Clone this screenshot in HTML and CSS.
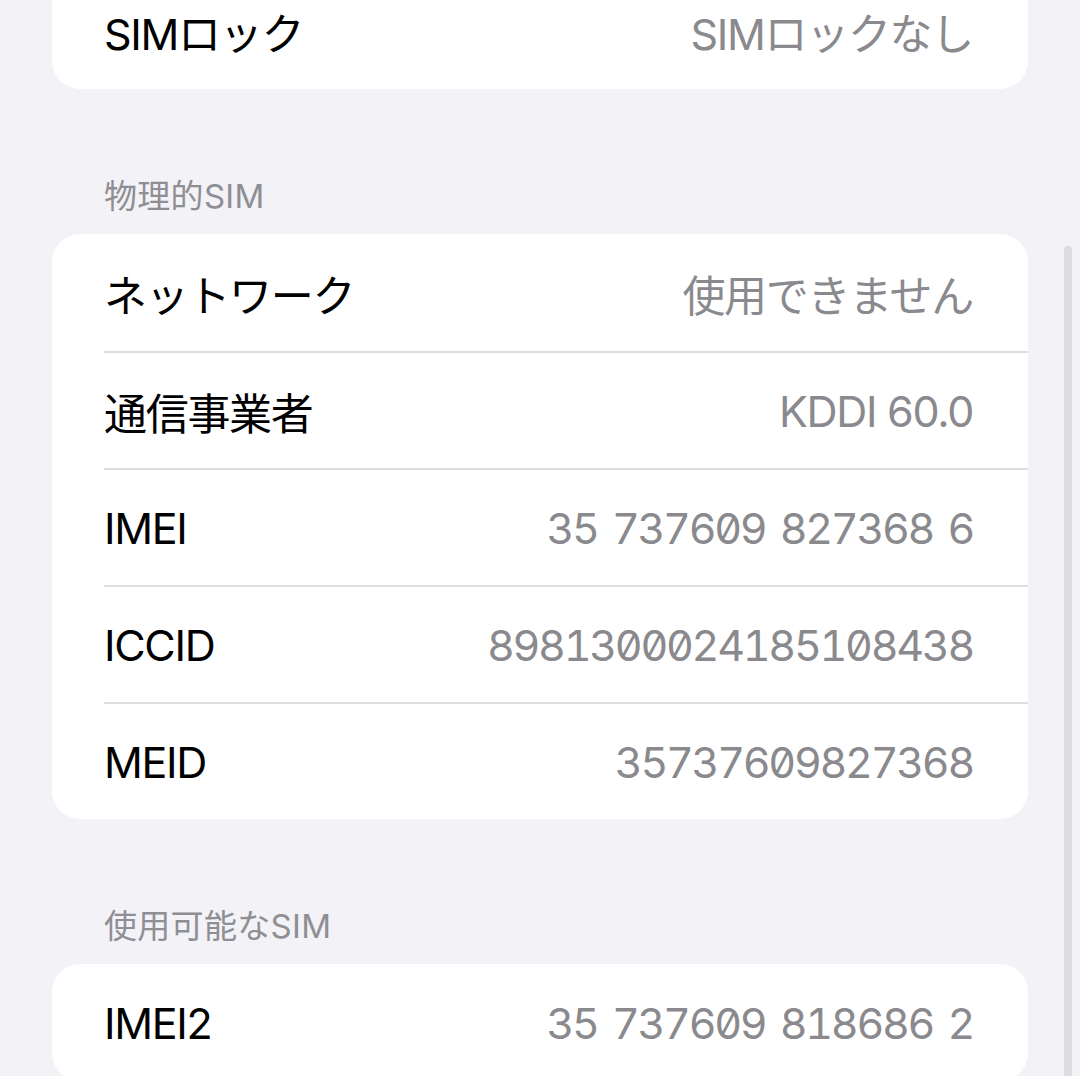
FILE: index.html
```html
<!DOCTYPE html>
<html lang="ja">
<head>
    <meta charset="UTF-8">
    <meta name="viewport" content="width=device-width, initial-scale=1.0">
    <title>SIM情報</title>
    <link rel="stylesheet" href="styles.css">
</head>
<body>
    <div class="page">
        <div class="card">
            <div class="row">
                <span class="label">SIMロック</span>
                <span class="value">SIMロックなし</span>
            </div>
        </div>

        <div class="section">物理的SIM</div>
        <div class="card">
            <div class="row">
                <span class="label">ネットワーク</span>
                <span class="value">使用できません</span>
            </div>
            <div class="row">
                <span class="label">通信事業者</span>
                <span class="value">KDDI 60.0</span>
            </div>
            <div class="row">
                <span class="label">IMEI</span>
                <span class="value num">35 737609 827368 6</span>
            </div>
            <div class="row">
                <span class="label">ICCID</span>
                <span class="value num">8981300024185108438</span>
            </div>
            <div class="row">
                <span class="label">MEID</span>
                <span class="value num">35737609827368</span>
            </div>
        </div>

        <div class="section">使用可能なSIM</div>
        <div class="card">
            <div class="row">
                <span class="label">IMEI2</span>
                <span class="value num">35 737609 818686 2</span>
            </div>
        </div>
    </div>
    <div class="scrollbar"></div>
</body>
</html>
```

FILE: styles.css
```css
*{
    margin:0;
    padding:0;
    box-sizing:border-box;
}

body{
    background:#f2f2f7;
    font-family:Inter, "Noto Sans CJK JP", sans-serif;
    height:1076px;
    overflow:hidden;
}

.page{
    margin-top:-28px;
    padding:0 52px;
}

.card{
    background:#fff;
    border-radius:28px;
    overflow:hidden;
}

.row{
    height:117px;
    margin-left:52px;
    padding-right:55px;
    display:flex;
    align-items:center;
    justify-content:space-between;
    font-size:43px;
    letter-spacing:-1.3px;
}
.row + .row{
    border-top:2px solid #dedee2;
}

.label{
    color:#000;
}
.value{
    color:#8a8a8e;
}
.num{
    font-feature-settings:"tnum", "zero";
    letter-spacing:-2.3px;
    word-spacing:5px;
}

.section{
    height:145px;
    padding:0 0 22px 52px;
    display:flex;
    align-items:flex-end;
    font-size:33px;
    line-height:32px;
    letter-spacing:0.3px;
    color:#8e8e93;
}

.scrollbar{
    position:absolute;
    top:246px;
    right:8px;
    width:8px;
    height:900px;
    border-radius:4px;
    background:#dcdce1;
}
```
